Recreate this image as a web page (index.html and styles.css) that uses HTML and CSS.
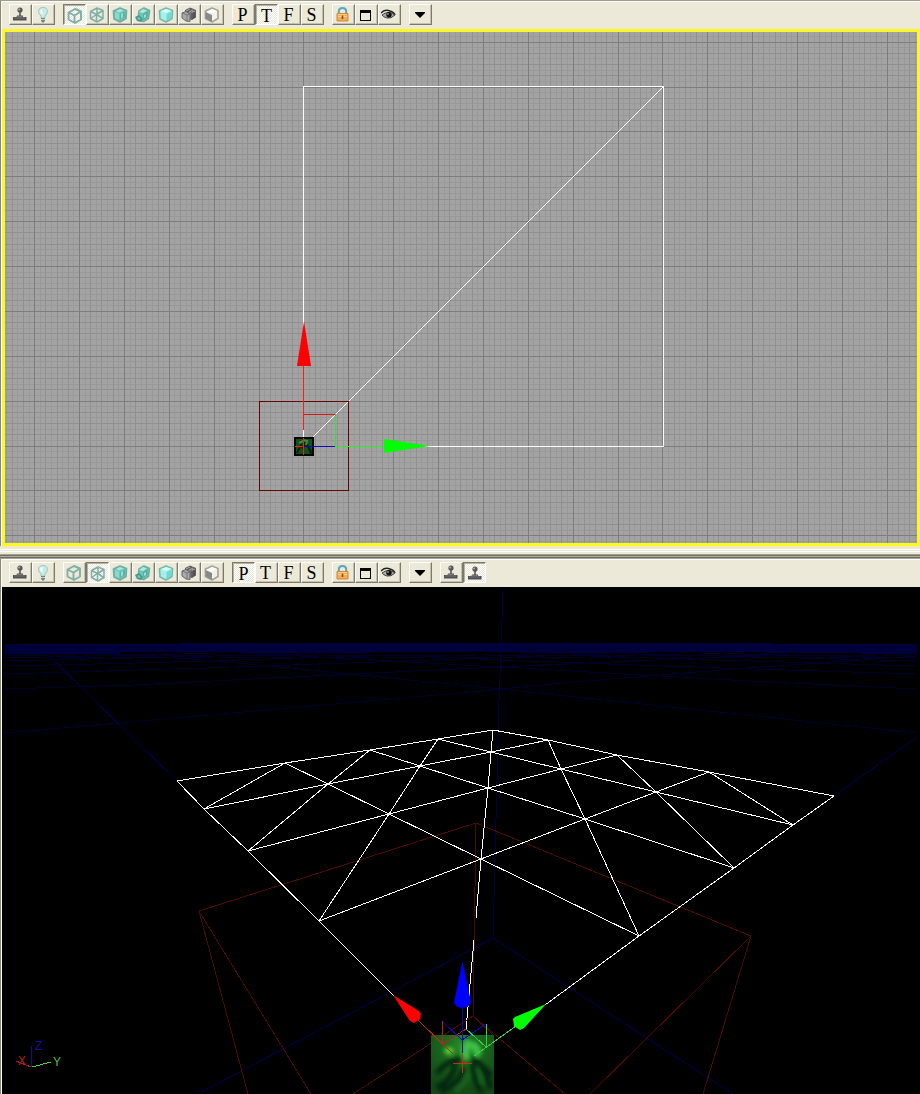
FILE: index.html
```
<!DOCTYPE html>
<html lang="en">
<head>
<meta charset="utf-8">
<title>Level editor viewports</title>
<link rel="stylesheet" href="styles.css">
</head>
<body>
<svg class="defs" aria-hidden="true">
  <defs>
    <symbol id="joystick" viewBox="0 0 16 16">
      <path d="M8 4v7" stroke="#555" stroke-width="1.6"/>
      <circle cx="8" cy="3" r="2.6" fill="#555"/><circle cx="7.2" cy="2.4" r="1" fill="#aaa"/>
      <path d="M5 8.500h6v1.500h3.500v3.500h-13.500v-3.500h4z" fill="#505050"/>
      <path d="M4.500 9.500h6M2 11h11" stroke="#777" fill="none"/>
    </symbol>
    <symbol id="bulb" viewBox="0 0 16 16">
      <path d="M3.500 4.500q0-4 4.500-4t4.500 4q0 2.500-2.500 4.500v2h-4v-2q-2.500-2-2.500-4.500z" fill="#c3ece8" stroke="#a3c6c3"/>
      <path d="M5 4q0-2 2.500-2.200v6q-2.500-1.500-2.500-3.800z" fill="#f3ffff"/>
      <path d="M6 11h4v3.500h-1v1h-2v-1h-1z" fill="#6f8582"/><path d="M6 12.500h4" stroke="#c9d4cb"/>
    </symbol>
    <symbol id="wire" viewBox="0 0 16 16">
      <path d="M1.500 4.500 8 1l6 2.500v8L8 15l-6.500-3.500zM1.500 4.500l6 3L14 3.500M7.500 7.500V15" fill="none" stroke="#7fb0a6" stroke-width="1.900" stroke-linejoin="round"/>
    </symbol>
    <symbol id="wiretri" viewBox="0 0 16 16">
      <path d="M1.500 4.500 8 1l6 2.500v8L8 15l-6.500-3.500zM1.500 4.500l6 3L14 3.500M7.500 7.500V15M8 1v6M1.500 11.500l6-4 6.500 4" fill="none" stroke="#7fb0a6" stroke-width="1.500" stroke-linejoin="round"/>
    </symbol>
    <symbol id="textured" viewBox="0 0 16 16">
      <path d="M1.500 4 8 1l6.500 2.500-.5 8L8 15l-6-3z" fill="#6fc5b8" stroke="#70ada3" stroke-width="1.700" stroke-linejoin="round"/>
      <path d="M3 5l4 1.500V13l-4-2z" fill="#8bd8cc"/><path d="M8 7l5-2.500V10L8 13z" fill="#5ab3a6"/><path d="M4 4l4-2 4 1.500-5 2z" fill="#a5e7db"/><path d="M9 7l2-1v4l-2 2z" fill="#93ded1"/>
    </symbol>
    <symbol id="lit" viewBox="0 0 16 16">
      <path d="M4 4l5-3 5.500 2.500-1 8-5 3L3 13z" fill="#6fc5b8" stroke="#70ada3" stroke-width="1.600" stroke-linejoin="round"/>
      <path d="M0 10l4-2 4 4-2 3-4-1z" fill="#469b8f"/><path d="M8 7l5-3-.5 6-4 3z" fill="#58aca0"/><path d="M4 5l4-3 4 1.500L8 6z" fill="#a9ece0"/><path d="M2 11l2-1 2 2-2 1z" fill="#78c4b8"/><path d="M9 8l2-1v3l-2 1z" fill="#99dfd3"/>
    </symbol>
    <symbol id="solid" viewBox="0 0 16 16">
      <path d="M1.500 4 8 1l6.500 2.500-.5 8L8 15l-6-3z" fill="#a3f2ea" stroke="#78b7ad" stroke-width="1.600" stroke-linejoin="round"/>
      <path d="M8.500 7l5-2.500v6.500l-5 3z" fill="#6fdad0"/><path d="M3 4l5-2 5 1.500L8 6z" fill="#d0fff8"/>
    </symbol>
    <symbol id="stack" viewBox="0 0 16 16">
      <path d="M4 3l5-2.500L15 3v7.500l-4 2.500L4 11z" fill="#5e5e5e"/>
      <path d="M7 5l5-1v7l-4 2z" fill="#7e7e7e"/><path d="M5 4l4-2M8 5l4-2M11 5l3-1" stroke="#aaa"/>
      <path d="M1 6l4-1.500L9 7v7.500L5 14l-4-3z" fill="#aaa" stroke="#666"/>
      <path d="M1 6l5 2 3-1M6 8v6" fill="none" stroke="#777"/><path d="M11 6v6M13 5v6" stroke="#444"/>
    </symbol>
    <symbol id="half" viewBox="0 0 16 16">
      <path d="M1.500 4 8 1l6 2.500v8L8 15l-6.500-3.500z" fill="#f2f1ea" stroke="#a5a498" stroke-width="1.700" stroke-linejoin="round"/>
      <path d="M1.500 5L8 8v7l-6.500-3.500z" fill="#898989"/><path d="M3 5l5-3 5 2-5 2.500z" fill="#fff"/>
    </symbol>
    <symbol id="lock" viewBox="0 0 16 16">
      <path d="M3.800 7V4.500Q3.800 1 7.500 1t3.700 3.500V7" fill="none" stroke="#55a8c4" stroke-width="2"/>
      <path d="M2 6.500h11V14H2z" fill="#f2ad58" stroke="#cf8737"/><path d="M3 7.500h9M3 9.500h9" stroke="#ffd08c"/>
      <path d="M7.500 8.500v3.500" stroke="#8a4a1c" stroke-width="1.600"/>
    </symbol>
    <symbol id="window" viewBox="0 0 16 16">
      <path d="M2 3h11v11H2zM3 6v7h9V6z" fill="#000" fill-rule="evenodd" shape-rendering="crispEdges"/>
    </symbol>
    <symbol id="eye" viewBox="0 0 16 16">
      <path d="M0 6Q4 2 9 4q4 1 5 4" fill="none" stroke="#222" stroke-width="1.500"/>
      <path d="M1 8q6-5 13 0-4 4-8 3T1 8z" fill="#aaa" stroke="#444"/>
      <circle cx="8" cy="7.800" r="2.700" fill="#111"/><circle cx="7" cy="7" r=".8" fill="#ddd"/>
    </symbol>
    <symbol id="down" viewBox="0 0 16 16"><path d="M3 5h10v1L8 11 3 6z" fill="#000"/></symbol>
    <radialGradient id="leaf" cx="50%" cy="18%" r="75%">
      <stop offset="0" stop-color="#2a8d31"/><stop offset=".35" stop-color="#1b6a20"/><stop offset="1" stop-color="#124a16"/>
    </radialGradient>
    <filter id="soft"><feGaussianBlur stdDeviation="2"/></filter>
    <clipPath id="tile"><path d="M431 1035h63v59h-63z"/></clipPath>
  </defs>
</svg>

<main class="editor">
  <section class="pane pane-top" aria-label="Top view">
    <div class="toolbar" data-mode="wire" data-view="T"></div>
    <div class="frame">
      <svg class="view" viewBox="5 32 912 511" role="img" aria-label="Top grid">
        <rect x="5" y="32" width="912" height="511" fill="#a3a3a3"/>
        <g fill="none" shape-rendering="crispEdges">
          <path id="grid-fine" stroke="#999"/>
          <path id="grid-mid" stroke="#909090"/>
          <path id="grid-major" stroke="#7d7d7d"/>
          <path d="M303.500 446V86.500H663.500V446.500H304" stroke="#fff"/>
          <path d="M304 446L663 87" stroke="#fff"/>
          <path d="M259.500 401.500h89v89h-89z" stroke="#640404"/>
          <path d="M303.500 365V430" stroke="#f02020"/>
          <path d="M304 414.500H335" stroke="#d01c18"/>
          <path d="M335.500 414V446M335 446.500H386" stroke="#30e828"/>
        </g>
        <path d="M304 321l7 45h-14z" fill="#f00"/>
        <path d="M430 446l-46-7v14z" fill="#0f0"/>
        <rect x="295" y="438" width="18" height="17" fill="#14501c" stroke="#000" stroke-width="2"/>
        <path d="M297 453l4-8 2 3 2-5 3 3 3 8M300 441l3 1M309 448l3 5" fill="none" stroke="#04220a" stroke-width="2"/>
        <path d="M299 443l4-2M303 440l4 1-1 4" fill="none" stroke="#35913d" stroke-width="2"/>
        <g fill="none" shape-rendering="crispEdges">
          <path d="M304 446.500H335" stroke="#0808c0"/>
          <path d="M303.500 438V455M295 446.500H303" stroke="#e02a12"/>
        </g>
      </svg>
    </div>
  </section>
  <div class="splitter" role="separator"></div>
  <section class="pane pane-bottom" aria-label="Perspective view">
    <div class="toolbar" data-mode="wiretri" data-view="P" data-realtime="yes"></div>
    <svg class="view" viewBox="2 587 918 507" role="img" aria-label="Perspective">
      <rect x="2" y="587" width="918" height="507" fill="#000"/>
      <g fill="none" shape-rendering="crispEdges" stroke="#000028">
        <path d="M5 733L460 693 500 689 575 682 660 675 747 668 833 662 917 656"/>
        <path d="M5 689L133 685 333 675 500 667 700 658"/>
        <path d="M5 674L206 668 460 659 600 654"/>
        <path d="M5 666L140 663 400 655M5 661L300 654M5 658L220 653"/>
        <path d="M917 733L500 689 420 681 340 673 270 666 205 660 100 653"/>
        <path d="M917 689L750 681 660 676 500 667 300 656"/>
        <path d="M917 674L720 668 500 660 400 655"/>
        <path d="M917 666L780 662 560 655M917 661L640 654M917 658L700 653"/>
        <path d="M5 655.500H917M60 657.500H880" stroke-dasharray="44 6 21 9"/>
      </g>
      <path d="M5 644H180V643H773V644H917V654H860V653H760V652H650V653H520V652H370V653H240V652H120V654H5z" fill="#00003a" shape-rendering="crispEdges"/>
      <g fill="none" shape-rendering="crispEdges" stroke="#000044">
        <path d="M503 590L501 650 499 700 493 938"/>
        <path d="M43 650L177 781M834 796L917 737"/>
        <path d="M493 938L198 1094M493 938L733 1094M423 1094L428 1090"/>
      </g>
      <g fill="none" shape-rendering="crispEdges" stroke="#4c0b08">
        <path d="M476 823L199 911 248 1094M199 911L311 1094"/>
        <path d="M476 823L751 936 703 1094M751 936L590 1094"/>
        <path d="M476 823L473 1016 353 1094M473 1016L565 1094"/>
      </g>
      <g fill="none" shape-rendering="crispEdges" stroke="#fff">
        <path d="M394 996L319 921 248 851 204 809 177 781 285 763 370 750 438 739 493 730 548 740 617 755 709 772 834 796 793 825 734 868 639 936 545 1005"/>
        <path d="M438 739L491 752 561 769 656 792 793 825"/>
        <path d="M370 750L420 766 488 788 585 819 734 868"/>
        <path d="M285 763L328 784 389 814 481 859 639 936"/>
        <path d="M548 740L491 752 420 766 328 784 204 809"/>
        <path d="M617 755L561 769 488 788 389 814 248 851"/>
        <path d="M709 772L656 792 585 819 481 859 319 921"/>
        <path d="M493 730L491 752 488 788 481 859 476 918M474 940L466 1029"/>
        <path d="M438 739L420 766 389 814 319 921M370 750L328 784 248 851M285 763L204 809"/>
        <path d="M548 740L561 769 585 819 639 936M617 755L656 792 734 868M709 772L793 825"/>
      </g>
      <rect x="431" y="1035" width="63" height="59" fill="url(#leaf)"/>
      <g clip-path="url(#tile)">
        <g filter="url(#soft)" fill="none" stroke-linecap="round">
          <path d="M438 1072q10-12 20-12 12-8 18 0 10 10 14 14M455 1066q-4 15-17 21M463 1070q-3 12-20 21M473 1064q0 15 8 27M482 1068q6 10 8 19" stroke="#04200a" stroke-width="5"/>
          <path d="M468 1044q-4 8-2 12M474 1046q5 4 3 7" stroke="#3dc247" stroke-width="8"/>
          <path d="M448 1051h2" stroke="#58d632" stroke-width="7"/>
          <path d="M468 1074q-2 10-12 17M478 1070q4 9 4 14" stroke="#1c6b22" stroke-width="3"/>
        </g>
      </g>
      <g fill="none" shape-rendering="crispEdges">
        <path d="M473 1016L444 1035M473 1016L493 1035" stroke="#4c0b08"/>
        <path d="M418 1020L453 1054M442.500 1021V1044L466 1029" stroke="#b8241c"/>
        <path d="M462.500 1006V1053M443 1022L462 1040 486 1024" stroke="#0a0ab4"/>
        <path d="M516 1026L474 1056M466 1029L486 1047M486.500 1024V1047" stroke="#35cf35"/>
        <path d="M453 1063.500H472M462.500 1054V1073" stroke="#d8280f"/>
      </g>
      <path d="M393 995L419 1011 421 1014 420 1019 414 1023 410 1021z" fill="#f00"/>
      <path d="M462.500 961L471 1002 468 1007 461 1008 456 1006 454 1002z" fill="#00f"/>
      <path d="M546 1004L515 1017 513 1019 514 1026 520 1030 524 1028z" fill="#0f0"/>
      <g fill="none" shape-rendering="crispEdges">
        <path d="M31.500 1067V1046" stroke="#10108c"/>
        <path d="M32 1067L51 1062" stroke="#4bd04b"/>
        <path d="M31 1067L16 1061" stroke="#a51c1c"/>
      </g>
      <g class="axis-label">
        <text x="18" y="1065" fill="#b02424">X</text>
        <text x="53" y="1066" fill="#4bbf4b">Y</text>
        <text x="35" y="1050" fill="#1010a0">Z</text>
      </g>
    </svg>
  </section>
</main>
<script src="editor.js"></script>
</body>
</html>
```
FILE: styles.css
```
* { box-sizing: border-box; }
body {
  margin: 0;
  background: #ece9d8;
  font-family: "Liberation Serif", "Times New Roman", serif;
}
.defs { position: absolute; width: 0; height: 0; }
.editor { display: flex; flex-direction: column; }
.pane {
  border-left: 1px solid #8a8778;
  box-shadow: inset 1px 0 #fffef4;
  padding-left: 1px;
}
.pane-top { border-top: 1px solid #a09d90; }
.toolbar {
  display: flex;
  gap: 8px;
  padding: 2px 7px 4px;
  border-top: 1px solid #fff;
  background: #ece9d8;
}
.group { display: flex; }
.tool {
  display: flex;
  align-items: center;
  justify-content: center;
  width: 23px;
  height: 21px;
  padding: 0 2px 0 0;
  border: 1px solid;
  border-color: #fff #7c7a6c #7c7a6c #fff;
  box-shadow: inset -1px -1px #c4c1b0;
  background: #ece9d8;
  color: #000;
  font-family: inherit;
  font-size: 18px;
  line-height: 18px;
}
.tool svg { width: 16px; height: 16px; flex: none; }
.tool[aria-pressed="true"] {
  border-color: #7c7a6c #fff #fff #7c7a6c;
  box-shadow: inset 1px 1px #b5b2a3;
  padding: 2px 0 0;
  background: repeating-conic-gradient(#fff 0 25%, #ece9d8 0 50%) 0 0 / 2px 2px;
}
.frame { border: 3px solid #fbf824; }
.view { display: block; width: 100%; height: auto; }
.splitter {
  height: 13px;
  background: linear-gradient(
    #f1ee9c 0 1px, #ece9d8 1px 3px, #fff 3px 4px, #ece9d8 4px 5px,
    #fff 5px 6px, #ece9d8 6px 8px, #a3a092 8px 9px, #747266 9px 10px,
    #aaa799 10px 11px, #747266 11px 12px, #a3a092 12px 13px);
}
.axis-label {
  font-family: "Liberation Sans", Arial, sans-serif;
  font-size: 12px;
}
```
FILE: editor.js
```
const groups = [
  [["joystick", "Realtime preview"], ["bulb", "Lighting"]],
  [["wire", "Brush wireframe"], ["wiretri", "Wireframe"], ["textured", "Textured"],
   ["lit", "Lit"], ["solid", "Unlit"], ["stack", "Complexity"], ["half", "Lighting only"]],
  ["P", "T", "F", "S"],
  [["lock", "Lock"], ["window", "Maximize"], ["eye", "Show flags"]],
  [["down", "Options"]]
];
const joysticks = [["joystick", "Joystick"], ["joystick", "Joystick active", true]];

document.querySelectorAll(".toolbar").forEach(bar => {
  const { mode, view, realtime } = bar.dataset;
  const all = realtime ? [...groups, joysticks] : groups;
  all.forEach(items => {
    const group = document.createElement("div");
    group.className = "group";
    items.forEach(item => {
      const button = document.createElement("button");
      button.type = "button";
      button.className = "tool";
      if (typeof item === "string") {
        button.textContent = item;
        button.setAttribute("aria-pressed", item === view);
      } else {
        const [icon, label, on] = item;
        button.innerHTML = `<svg aria-hidden="true"><use href="#${icon}"/></svg>`;
        button.setAttribute("aria-label", label);
        button.setAttribute("aria-pressed", Boolean(on) || icon === mode);
      }
      group.append(button);
    });
    bar.append(group);
  });
});

const paths = { fine: "", mid: "", major: "" };
const cell = 359 / 64;
const kind = i => i % 8 === 0 ? "major" : i % 2 === 0 ? "mid" : "fine";
for (let i = -60; i < 120; i++) {
  const x = Math.floor(303.9 + i * cell) + 0.5;
  if (x > 5 && x < 917) paths[kind(i)] += `M${x} 32V543`;
  const y = Math.floor(446 - i * cell) + 0.5;
  if (y > 32 && y < 543) paths[kind(i)] += `M5 ${y}H917`;
}
for (const name in paths) {
  document.getElementById("grid-" + name).setAttribute("d", paths[name]);
}
```
